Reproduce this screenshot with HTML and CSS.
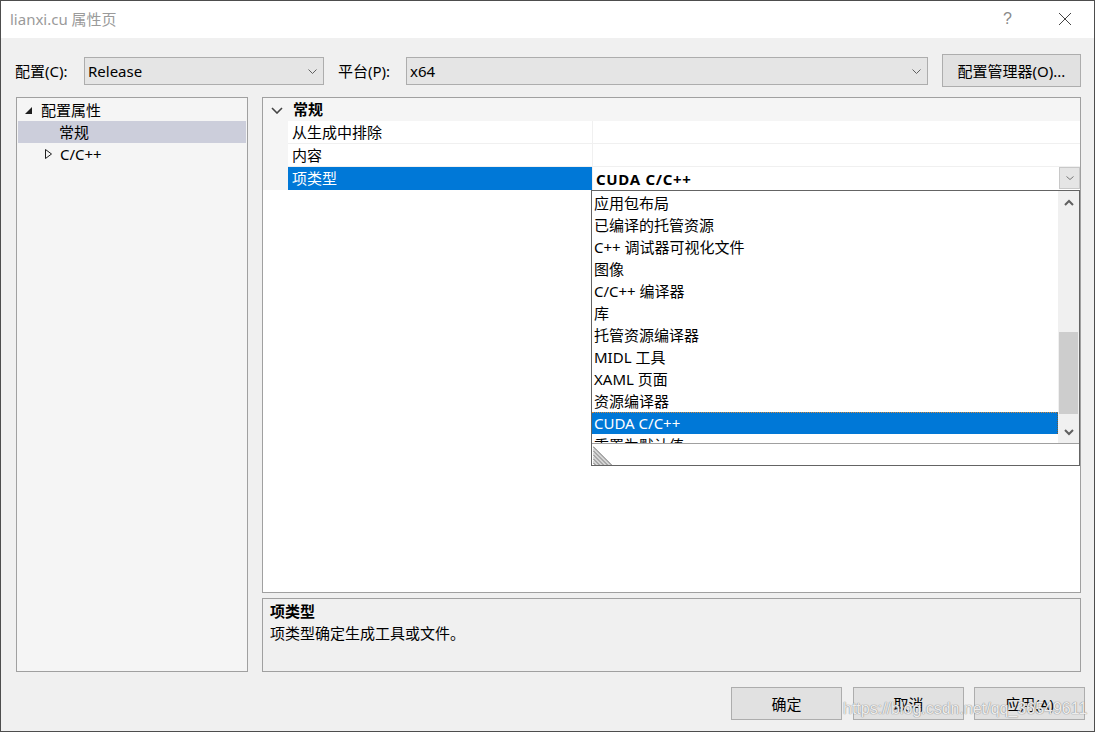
FILE: index.html
```html
<!DOCTYPE html>
<html>
<head>
<meta charset="utf-8">
<title>lianxi.cu 属性页</title>
<link rel="stylesheet" href="styles.css">
</head>
<body>
<div class="window">
  <div class="titlebar">
    <span class="title">lianxi.cu 属性页</span>
    <span class="help">?</span>
    <svg class="close" width="14" height="14" viewBox="0 0 14 14"><path d="M1 1 L13 13 M13 1 L1 13" stroke="#444" stroke-width="1" fill="none"/></svg>
  </div>

  <div class="toolbar">
    <span class="lbl lbl-config">配置(C):</span>
    <div class="combo combo-config">
      <span class="combo-text">Release</span>
      <svg class="chev" width="9" height="5" viewBox="0 0 9 5"><polyline points="0.5,0.5 4.5,4.5 8.5,0.5" stroke="#606060" fill="none"/></svg>
    </div>
    <span class="lbl lbl-platform">平台(P):</span>
    <div class="combo combo-platform">
      <span class="combo-text">x64</span>
      <svg class="chev" width="9" height="5" viewBox="0 0 9 5"><polyline points="0.5,0.5 4.5,4.5 8.5,0.5" stroke="#606060" fill="none"/></svg>
    </div>
    <div class="btn btn-manager">配置管理器(O)...</div>
  </div>

  <div class="main">
    <div class="tree">
      <div class="tree-item lvl0">
        <svg class="tri" width="8" height="8" viewBox="0 0 8 8"><polygon points="7,0 7,7 0,7" fill="#1e1e1e"/></svg>
        <span>配置属性</span>
      </div>
      <div class="tree-item lvl1 selected"><span>常规</span></div>
      <div class="tree-item lvl1b">
        <svg class="tri-open" width="8" height="11" viewBox="0 0 8 11"><polygon points="0.5,0.5 6.5,5 0.5,9.5" stroke="#1e1e1e" fill="none"/></svg>
        <span>C/C++</span>
      </div>
    </div>

    <div class="right">
      <div class="grid">
        <div class="grid-row header">
          <div class="margin">
            <svg class="hchev" width="12" height="7" viewBox="0 0 12 7"><polyline points="1,1 6,6 11,1" stroke="#444" stroke-width="1.6" fill="none"/></svg>
          </div>
          <div class="hname">常规</div>
        </div>
        <div class="grid-row">
          <div class="margin"></div>
          <div class="name">从生成中排除</div>
          <div class="value"></div>
        </div>
        <div class="grid-row">
          <div class="margin"></div>
          <div class="name">内容</div>
          <div class="value"></div>
        </div>
        <div class="grid-row sel">
          <div class="margin"></div>
          <div class="name">项类型</div>
          <div class="value">
            <span class="bold-val">CUDA C/C++</span>
            <div class="drop-btn">
              <svg width="8" height="4" viewBox="0 0 8 4"><polyline points="0.5,0.5 4,3.5 7.5,0.5" stroke="#777" fill="none"/></svg>
            </div>
          </div>
        </div>

        <div class="dropdown">
          <div class="list-area">
            <div class="items">
              <div class="item">应用包布局</div>
              <div class="item">已编译的托管资源</div>
              <div class="item">C++ 调试器可视化文件</div>
              <div class="item">图像</div>
              <div class="item">C/C++ 编译器</div>
              <div class="item">库</div>
              <div class="item">托管资源编译器</div>
              <div class="item">MIDL 工具</div>
              <div class="item">XAML 页面</div>
              <div class="item">资源编译器</div>
              <div class="item active">CUDA C/C++</div>
              <div class="item">重置为默认值</div>
            </div>
            <div class="scrollbar">
              <svg class="sarrow" width="10" height="7" viewBox="0 0 10 7"><polyline points="1,6 5,2 9,6" stroke="#606060" stroke-width="2" fill="none"/></svg>
              <div class="track">
                <div class="thumb"></div>
              </div>
              <svg class="sarrow" width="10" height="7" viewBox="0 0 10 7"><polyline points="1,1 5,5 9,1" stroke="#606060" stroke-width="2" fill="none"/></svg>
            </div>
          </div>
          <div class="grip-area">
            <svg class="grip" width="20" height="20" viewBox="0 0 20 20">
              <g stroke="#555" stroke-width="1">
                <line x1="0" y1="1.5" x2="18.5" y2="20"/>
                <line x1="0" y1="5.5" x2="14.5" y2="20"/>
                <line x1="0" y1="9.5" x2="10.5" y2="20"/>
                <line x1="0" y1="13.5" x2="6.5" y2="20"/>
                <line x1="0" y1="17.5" x2="2.5" y2="20"/>
              </g>
              <g stroke="#aaa" stroke-width="1">
                <line x1="0" y1="3.5" x2="16.5" y2="20"/>
                <line x1="0" y1="7.5" x2="12.5" y2="20"/>
                <line x1="0" y1="11.5" x2="8.5" y2="20"/>
                <line x1="0" y1="15.5" x2="4.5" y2="20"/>
              </g>
            </svg>
          </div>
        </div>
      </div>

      <div class="desc">
        <div class="desc-title">项类型</div>
        <div class="desc-text">项类型确定生成工具或文件。</div>
      </div>
    </div>
  </div>

  <div class="footer">
    <div class="btn btn-foot">确定</div>
    <div class="btn btn-foot btn-cancel">取消</div>
    <div class="btn btn-foot btn-apply">应用(A)</div>
    <span class="watermark">https://blog.csdn.net/qq_36549611</span>
  </div>
</div>
</body>
</html>
```

FILE: styles.css
```css
* {
  box-sizing: border-box;
}

html, body {
  margin: 0;
  padding: 0;
  background: #f0f0f0;
}

body {
  font-family: "Noto Sans", "Noto Sans CJK SC", sans-serif;
  font-size: 15px;
  color: #000;
}

.window {
  width: 1095px;
  height: 732px;
  border: 1px solid #4d4d4d;
  background: #f0f0f0;
  display: flex;
  flex-direction: column;
  overflow: hidden;
  position: relative;
}

/* ---------- title bar ---------- */
.titlebar {
  height: 37px;
  background: #fff;
  display: flex;
  align-items: center;
  padding-left: 9px;
  flex-shrink: 0;
}

.title {
  color: #9a9a9a;
  font-size: 15px;
  line-height: 20px;
  margin-top: -1px;
}

.help {
  margin-left: auto;
  color: #8a8a8a;
  font-size: 16px;
  font-family: "Liberation Sans", sans-serif;
  margin-right: 46px;
  margin-top: -2px;
}

.close {
  margin-right: 22px;
  margin-top: -2px;
}

/* ---------- toolbar ---------- */
.toolbar {
  display: flex;
  align-items: center;
  height: 33px;
  margin-top: 16px;
  padding-left: 14px;
  flex-shrink: 0;
}

.lbl {
  line-height: 20px;
  white-space: nowrap;
}

.lbl-config {
  width: 69px;
}

.lbl-platform {
  width: 68px;
  margin-left: 14px;
}

.combo {
  height: 28px;
  background: #e5e5e5;
  border: 1px solid #adadad;
  display: flex;
  align-items: center;
  padding-left: 3px;
  padding-right: 6px;
}

.combo-config {
  width: 240px;
}

.combo-platform {
  width: 522px;
}

.combo-text {
  flex: 1;
  line-height: 20px;
}

.chev {
  flex-shrink: 0;
  margin-top: 1px;
}

.btn {
  background: #e1e1e1;
  border: 1px solid #adadad;
  display: flex;
  align-items: center;
  justify-content: center;
  line-height: 20px;
  white-space: nowrap;
}

.btn-manager {
  width: 139px;
  height: 33px;
  margin-left: 14px;
}

/* ---------- main ---------- */
.main {
  display: flex;
  margin-top: 10px;
  padding-left: 15px;
  padding-right: 13px;
  height: 575px;
  flex-shrink: 0;
}

.tree {
  width: 232px;
  border: 1px solid #a0a0a0;
  background: #f5f5f5;
  padding-top: 1px;
  padding-left: 1px;
  padding-right: 1px;
  flex-shrink: 0;
}

.tree-item {
  height: 22px;
  display: flex;
  align-items: center;
  line-height: 20px;
  white-space: nowrap;
}

.tree-item.lvl0 {
  padding-left: 7px;
}

.tree-item.lvl0 .tri {
  margin-right: 8px;
  margin-top: 1px;
}

.tree-item.lvl1 {
  padding-left: 41px;
}

.tree-item.selected {
  background: #cccedb;
}

.tree-item.lvl1b {
  padding-left: 27px;
}

.tree-item.lvl1b .tri-open {
  margin-right: 7px;
}

.right {
  flex: 1;
  margin-left: 14px;
  display: flex;
  flex-direction: column;
}

/* ---------- property grid ---------- */
.grid {
  height: 496px;
  border: 1px solid #a0a0a0;
  background: #fff;
  position: relative;
  flex-shrink: 0;
}

.grid-row {
  display: flex;
  height: 23px;
}

.grid-row .margin {
  width: 25px;
  flex-shrink: 0;
  background: #f5f5f5;
  display: flex;
  align-items: center;
  justify-content: center;
}

.grid-row.header {
  background: #f5f5f5;
}

.hchev {
  margin-left: 2px;
  margin-top: 1px;
}

.hname {
  font-weight: bold;
  padding-left: 5px;
  line-height: 23px;
}

.grid-row .name {
  width: 304px;
  flex-shrink: 0;
  padding-left: 4px;
  line-height: 22px;
  border-bottom: 1px solid #f0f0f0;
  white-space: nowrap;
}

.grid-row .value {
  flex: 1;
  border-left: 1px solid #f0f0f0;
  border-bottom: 1px solid #f0f0f0;
  display: flex;
  align-items: center;
  padding-left: 3px;
}

.grid-row.sel .name {
  background: #0078d7;
  color: #fff;
  border-bottom-color: #0078d7;
}

.grid-row.sel .value {
  border-bottom: none;
}

.bold-val {
  font-weight: bold;
  flex: 1;
  line-height: 22px;
  letter-spacing: 0.7px;
}

.drop-btn {
  width: 21px;
  height: 22px;
  background: #e5e5e5;
  border: 1px solid #c8c8c8;
  display: flex;
  align-items: center;
  justify-content: center;
  align-self: flex-start;
}

/* ---------- dropdown list (overlay) ---------- */
.dropdown {
  position: absolute;
  left: 328px;
  top: 92px;
  width: 489px;
  height: 276px;
  background: #fff;
  border: 1px solid #646464;
  display: flex;
  flex-direction: column;
}

.list-area {
  display: flex;
  height: 253px;
  border-bottom: 1px solid #a0a0a0;
}

.items {
  flex: 1;
  overflow: hidden;
  padding-top: 1px;
}

.item {
  height: 22px;
  line-height: 22px;
  padding-left: 2px;
  white-space: nowrap;
}

.item.active {
  background: #0078d7;
  color: #fff;
  border-top: 1px dotted #d98a3a;
  border-right: 1px dotted #6a5a40;
  line-height: 21px;
}

.scrollbar {
  width: 21px;
  background: #f0f0f0;
  display: flex;
  flex-direction: column;
  align-items: center;
  padding-top: 1px;
}

.sarrow {
  flex-shrink: 0;
  margin: 7px 0;
}

.track {
  flex: 1;
  width: 100%;
  position: relative;
}

.thumb {
  position: absolute;
  left: 1px;
  right: 1px;
  top: 119px;
  height: 82px;
  background: #cdcdcd;
}

.grip-area {
  flex: 1;
  position: relative;
}

.grip {
  position: absolute;
  left: 1px;
  bottom: 0;
}

/* ---------- description ---------- */
.desc {
  margin-top: 5px;
  height: 74px;
  border: 1px solid #a0a0a0;
  background: #f0f0f0;
  padding: 1px 7px;
}

.desc-title {
  font-weight: bold;
  line-height: 22px;
}

.desc-text {
  line-height: 22px;
}

/* ---------- footer ---------- */
.footer {
  display: flex;
  justify-content: flex-end;
  margin-top: 15px;
  padding-right: 9px;
  position: relative;
}

.btn-foot {
  width: 111px;
  height: 33px;
}

.btn-cancel {
  margin-left: 11px;
}

.btn-apply {
  margin-left: 10px;
}

.watermark {
  position: absolute;
  left: 842px;
  top: 13px;
  font-family: "Liberation Sans", sans-serif;
  font-size: 16px;
  color: rgba(255, 255, 255, 0.85);
  text-shadow: 0 0 1px #8a8a8a, 0 0 1px #8a8a8a;
  white-space: nowrap;
  pointer-events: none;
}
```
